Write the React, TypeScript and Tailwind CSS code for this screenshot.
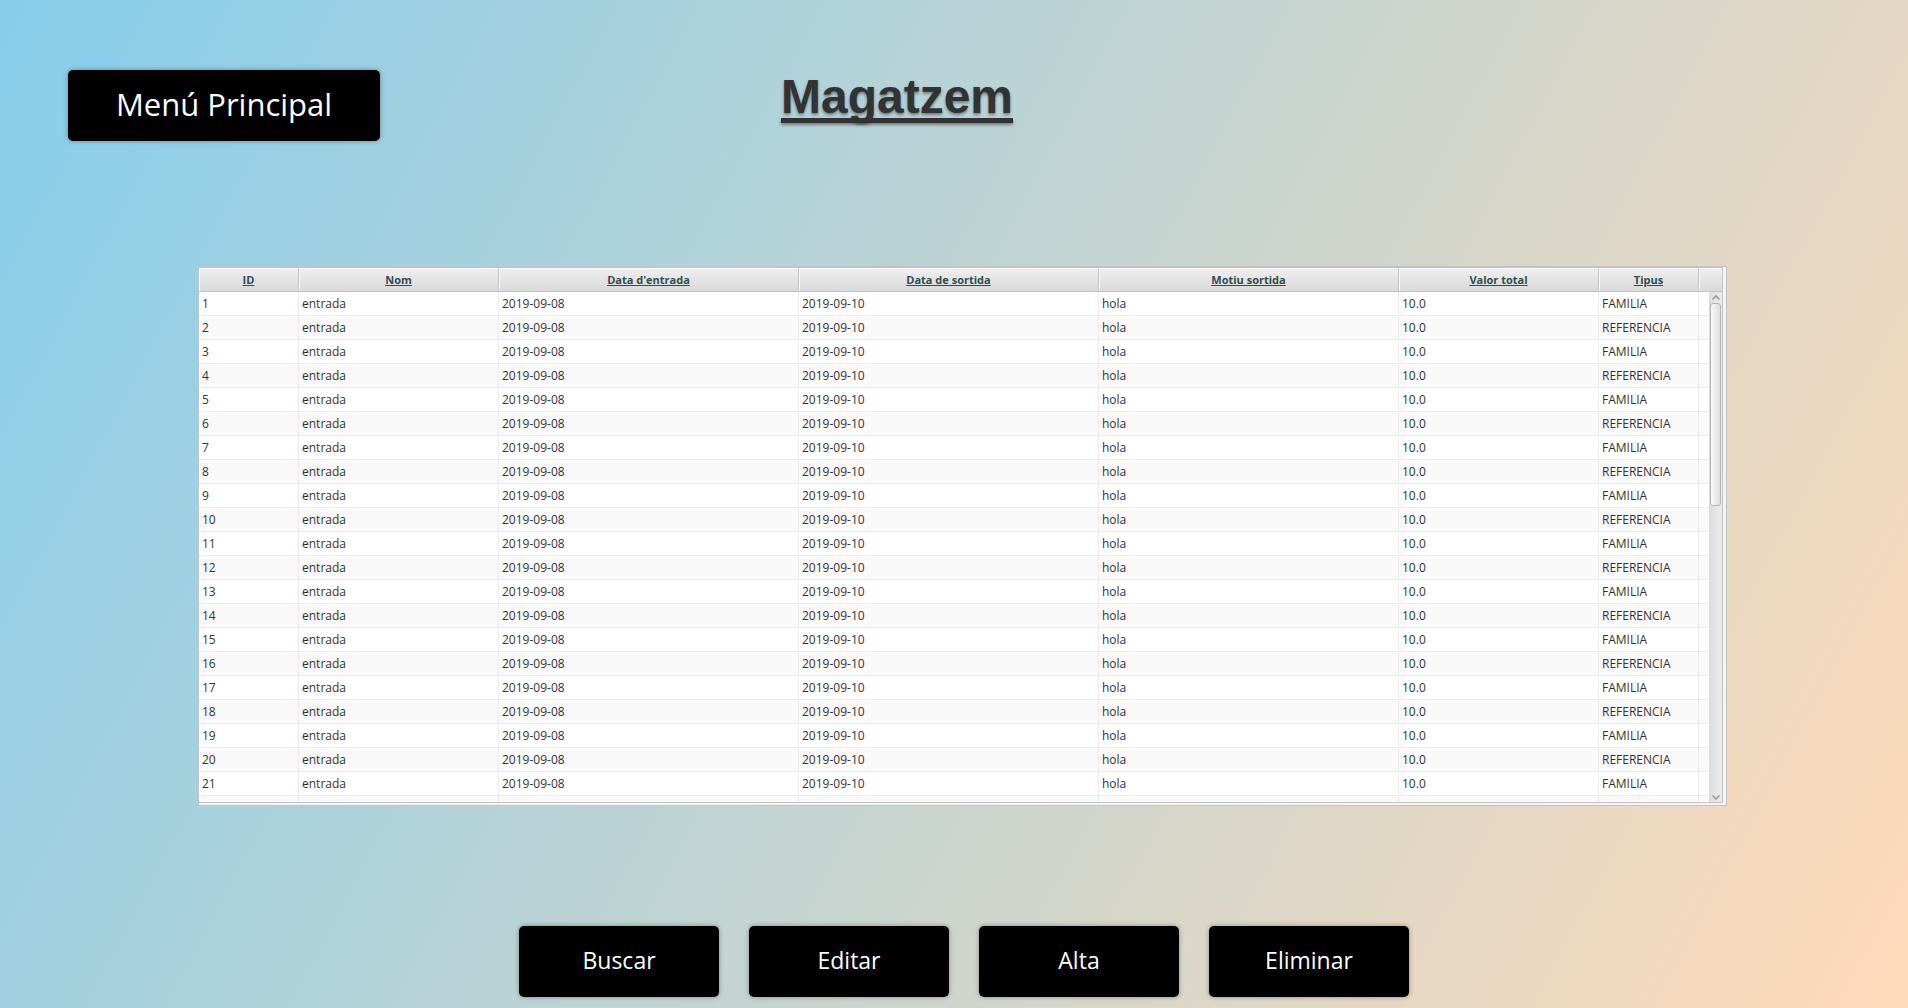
const columns = [
  { label: 'ID', width: 'w-[100px]' },
  { label: 'Nom', width: 'w-[200px]' },
  { label: "Data d'entrada", width: 'w-[300px]' },
  { label: 'Data de sortida', width: 'w-[300px]' },
  { label: 'Motiu sortida', width: 'w-[300px]' },
  { label: 'Valor total', width: 'w-[200px]' },
  { label: 'Tipus', width: 'w-[100px]' },
];

const rows = Array.from({ length: 21 }, (_, i) => [
  String(i + 1),
  'entrada',
  '2019-09-08',
  '2019-09-10',
  'hola',
  '10.0',
  i % 2 === 0 ? 'FAMILIA' : 'REFERENCIA',
]);

const actions = ['Buscar', 'Editar', 'Alta', 'Eliminar'];

const buttonStyle =
  'h-[71px] rounded-[5px] bg-black pb-[2px] text-white shadow-[0_0_5px_rgba(0,0,0,0.35)]';

function Chevron({ down = false }: { down?: boolean }) {
  return (
    <svg viewBox="0 0 8 5" className="h-[5px] w-2" fill="none" stroke="#999" strokeWidth="1.5">
      <path d={down ? 'M0.5 0.5 4 4 7.5 0.5' : 'M0.5 4.5 4 1 7.5 4.5'} />
    </svg>
  );
}

function ScrollBar() {
  return (
    <div className="flex w-[13px] shrink-0 flex-col items-center bg-linear-to-r from-[#dcdcdc] to-[#ececec]">
      <button aria-label="Amunt" className="flex h-[11px] w-full items-center justify-center">
        <Chevron />
      </button>
      <div className="flex w-full grow flex-col items-center">
        <div className="h-[203px] w-[11px] rounded-[3px] border border-[#b4b4b4] bg-linear-to-r from-[#fafafa] to-[#dedede]" />
      </div>
      <button aria-label="Avall" className="flex h-[10px] w-full items-center justify-center">
        <Chevron down />
      </button>
    </div>
  );
}

const headCell =
  'h-6 border-b border-[#c3c3c3] bg-linear-to-b from-[#efefef] to-[#d9d9d9] p-0 pt-px text-center font-bold shadow-[inset_1px_1px_0_#f8f8f8]';

function StockTable() {
  return (
    <div className="mx-auto w-full max-w-[1530px] border border-l-2 border-[#c3c3c3] bg-[#f4f4f4] pr-[3px] pb-[2px]">
      <div className="relative overflow-hidden border-t border-r border-b border-[#c3c3c3] bg-white">
        <table className="w-full table-fixed border-separate border-spacing-0 text-[12px] leading-[22px]">
          <thead className="text-[11px] text-[#2f4f4f]">
            <tr>
              {columns.map((c) => (
                <th key={c.label} scope="col" className={`${headCell} border-r ${c.width}`}>
                  <span className="underline">{c.label}</span>
                </th>
              ))}
              <td className={headCell} />
            </tr>
          </thead>
          <tbody className="text-[#323232]">
            {rows.map((row) => (
              <tr key={row[0]} className="odd:bg-white even:bg-[#f9f9f9]">
                {row.map((value, i) => (
                  <td key={i} className="h-6 border-r border-b border-[#ededed] px-[3px] py-0">
                    {value}
                  </td>
                ))}
                <td className="border-b border-[#ededed] p-0" />
              </tr>
            ))}
            <tr aria-hidden="true" className="bg-[#f9f9f9]">
              {columns.map((c) => (
                <td key={c.label} className="h-[6px] border-r border-[#ededed] p-0" />
              ))}
              <td className="p-0" />
            </tr>
          </tbody>
        </table>
        <div className="absolute top-6 right-0 bottom-0 flex">
          <ScrollBar />
        </div>
      </div>
    </div>
  );
}

export default function App() {
  return (
    <div className="flex min-h-screen flex-col bg-[linear-gradient(118deg,#87ceeb,#ffdab9)] font-['Open_Sans','Noto_Sans',sans-serif]">
      <header className="grid grid-cols-[1fr_auto_1fr] items-start pt-[70px] pr-[182px] pl-[68px]">
        <button className={`${buttonStyle} w-[312px] text-[31px]`}>Menú Principal</button>
        <h1 className="font-['Liberation_Sans',Arial,sans-serif] text-[48px] leading-[54px] font-bold text-[#333] underline decoration-[5px] underline-offset-[5px] [text-decoration-skip-ink:none] [text-shadow:0_2px_3px_rgba(0,0,0,0.4)]">
          Magatzem
        </h1>
      </header>
      <main className="pt-[125px] pl-[16px]">
        <StockTable />
      </main>
      <footer className="flex justify-center gap-[30px] pt-[120px] pb-[11px] pl-[20px]">
        {actions.map((label) => (
          <button key={label} className={`${buttonStyle} w-[200px] text-[23px]`}>
            {label}
          </button>
        ))}
      </footer>
    </div>
  );
}
